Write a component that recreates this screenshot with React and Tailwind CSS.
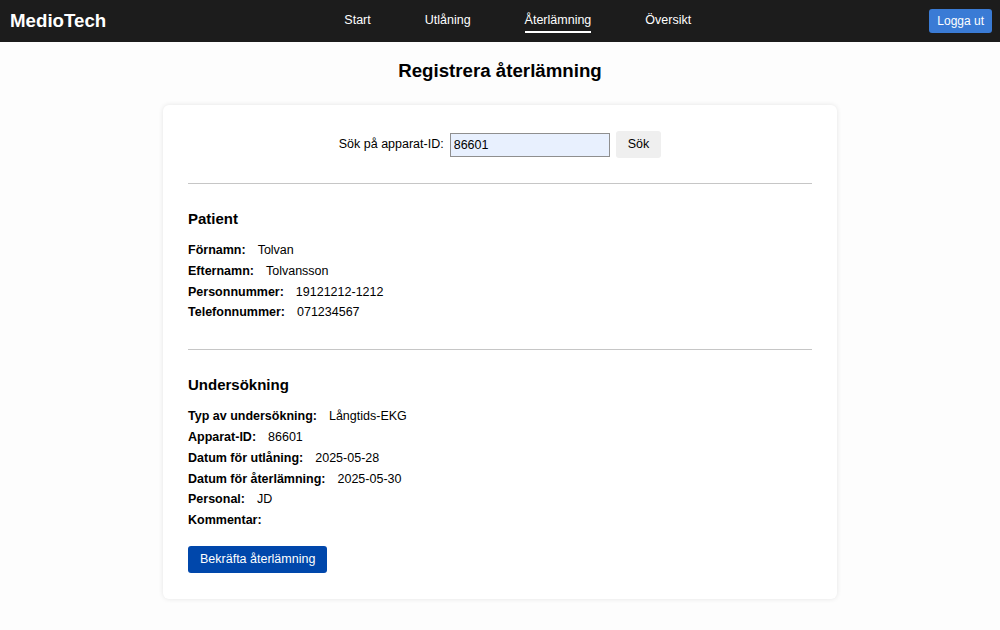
const patient = [
  ['Förnamn:', 'Tolvan'],
  ['Efternamn:', 'Tolvansson'],
  ['Personnummer:', '19121212-1212'],
  ['Telefonnummer:', '071234567'],
]

const exam = [
  ['Typ av undersökning:', 'Långtids-EKG'],
  ['Apparat-ID:', '86601'],
  ['Datum för utlåning:', '2025-05-28'],
  ['Datum för återlämning:', '2025-05-30'],
  ['Personal:', 'JD'],
  ['Kommentar:', ''],
]

function InfoRows({ rows }) {
  return (
    <div>
      {rows.map(([label, value]) => (
        <div key={label} className="flex h-[20.8px] items-center gap-[12px] text-[12.5px] text-black">
          <span className="font-bold">{label}</span>
          <span>{value}</span>
        </div>
      ))}
    </div>
  )
}

export default function App() {
  const nav = ['Start', 'Utlåning', 'Återlämning', 'Översikt']
  return (
    <div className="min-h-[630px] bg-[#fdfdfd] font-['Liberation_Sans',Arial,sans-serif]">
      <header className="flex h-[42px] items-center bg-[#1c1c1c] pl-[10px] pr-[8px]">
        <div className="text-[18.7px] font-bold text-white">MedioTech</div>
        <nav className="flex flex-1 justify-center gap-[54px]">
          {nav.map((item) => (
            <a
              key={item}
              className={
                item === 'Återlämning'
                  ? 'relative pb-[2px] text-[12.5px] text-white after:absolute after:left-0 after:right-0 after:top-[20px] after:h-[2px] after:bg-white'
                  : 'pb-[2px] text-[12.5px] text-white'
              }
            >
              {item}
            </a>
          ))}
        </nav>
        <button
          type="button"
          className="h-[24px] rounded-[3px] bg-[#3a7bd5] px-[8px] text-[12px] text-white"
        >
          Logga ut
        </button>
      </header>

      <h1 className="mt-[18px] text-center text-[18.7px] font-bold leading-[21px] text-black">
        Registrera återlämning
      </h1>

      <div className="mx-auto mt-[24px] w-[674px] rounded-[6px] bg-white px-[25px] pb-[26px] pt-[26px] shadow-[0_0_5px_rgba(0,0,0,0.1)]">
        <div className="flex items-center justify-center gap-[6px] text-[12.5px]">
          <label className="text-black">Sök på apparat-ID:</label>
          <input
            defaultValue="86601"
            className="h-[24px] w-[160px] border border-[#8f8f8f] bg-[#e8f0fe] px-[3px] text-[12.5px] text-black outline-none"
          />
          <button type="button" className="h-[27px] rounded-[3px] bg-[#efefef] px-[12px] text-[12.5px] text-black">
            Sök
          </button>
        </div>

        <hr className="mt-[25px] border-t border-[#c6c6c6]" />

        <h2 className="mt-[26px] text-[15px] font-bold leading-[18px] text-black">Patient</h2>
        <div className="mt-[12px]">
          <InfoRows rows={patient} />
        </div>

        <hr className="mt-[26px] border-t border-[#c6c6c6]" />

        <h2 className="mt-[26px] text-[15px] font-bold leading-[18px] text-black">Undersökning</h2>
        <div className="mt-[12px]">
          <InfoRows rows={exam} />
        </div>

        <button
          type="button"
          className="mt-[15px] h-[27px] rounded-[3px] bg-[#0047ab] px-[12px] text-[12.5px] text-white"
        >
          Bekräfta återlämning
        </button>
      </div>
    </div>
  )
}
